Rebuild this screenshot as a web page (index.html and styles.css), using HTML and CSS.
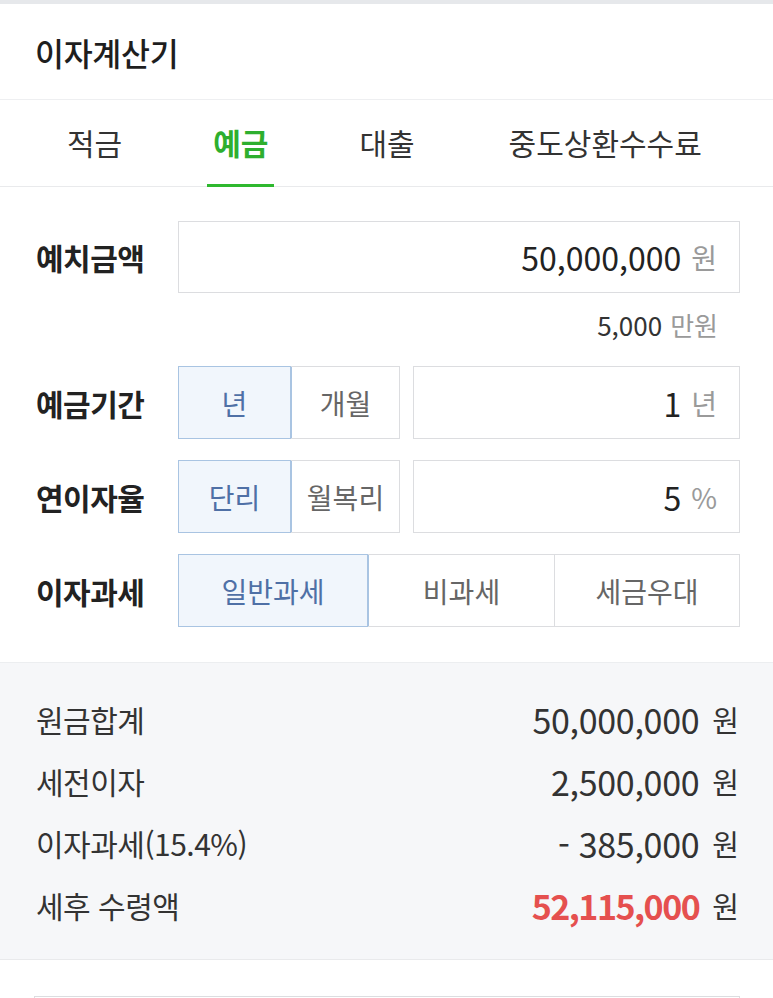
FILE: index.html
```html
<!DOCTYPE html>
<html lang="ko">
<head>
<meta charset="utf-8">
<title>이자계산기</title>
<link rel="stylesheet" href="styles.css">
</head>
<body>
<div class="topbar"></div>
<header class="header"><h1 class="title">이자계산기</h1></header>
<nav class="tabs">
  <span class="tab">적금</span>
  <span class="tab active">예금</span>
  <span class="tab">대출</span>
  <span class="tab">중도상환수수료</span>
</nav>
<section class="form">
  <div class="row">
    <div class="label">예치금액</div>
    <div class="box field"><span class="num">50,000,000</span><span class="unit">원</span></div>
  </div>
  <div class="sub"><span class="num">5,000</span><span class="unit">만원</span></div>
  <div class="row">
    <div class="label">예금기간</div>
    <div class="split">
      <div class="seg two">
        <span class="opt on">년</span>
        <span class="opt">개월</span>
      </div>
      <div class="box field"><span class="num">1</span><span class="unit">년</span></div>
    </div>
  </div>
  <div class="row gap">
    <div class="label">연이자율</div>
    <div class="split">
      <div class="seg two">
        <span class="opt on">단리</span>
        <span class="opt">월복리</span>
      </div>
      <div class="box field"><span class="num">5</span><span class="unit">%</span></div>
    </div>
  </div>
  <div class="row gap">
    <div class="label">이자과세</div>
    <div class="seg three">
      <span class="opt on">일반과세</span>
      <span class="opt">비과세</span>
      <span class="opt">세금우대</span>
    </div>
  </div>
</section>
<section class="result">
  <div class="res-row"><span class="res-label">원금합계</span><span class="res-val"><span class="amt">50,000,000</span><span class="won">원</span></span></div>
  <div class="res-row"><span class="res-label">세전이자</span><span class="res-val"><span class="amt">2,500,000</span><span class="won">원</span></span></div>
  <div class="res-row"><span class="res-label">이자과세(15.4%)</span><span class="res-val"><span class="amt">- 385,000</span><span class="won">원</span></span></div>
  <div class="res-row"><span class="res-label">세후 수령액</span><span class="res-val"><span class="amt total">52,115,000</span><span class="won">원</span></span></div>
</section>
<div class="next-box"></div>
</body>
</html>
```
FILE: styles.css
```css
* { box-sizing: border-box; }
body {
  margin: 0;
  background: #ffffff;
  font-family: "Noto Sans CJK KR", "Noto Sans", sans-serif;
  color: #222;
  overflow: hidden;
}
.topbar { height: 4px; background: #e6e8eb; }
.header {
  height: 96px;
  display: flex;
  align-items: center;
  padding-left: 35px;
  border-bottom: 1px solid #eeeff1;
}
.title {
  margin: 0;
  font-size: 31.5px;
  font-weight: 500;
  color: #1e1e1e;
  letter-spacing: -0.3px;
}
.tabs {
  height: 87px;
  display: flex;
  gap: 79px;
  padding-left: 61px;
  border-bottom: 1px solid #e9eaec;
}
.tab {
  display: flex;
  align-items: center;
  padding: 0 6px;
  font-size: 30px;
  color: #333;
  margin-bottom: -1px;
  border-bottom: 3px solid transparent;
}
.tab:last-child { margin-left: 3px; }
.tab.active {
  color: #2eaf2e;
  font-weight: 700;
  border-bottom-color: #2eb82e;
}
.form {
  padding: 34px 33px 35px 36px;
  border-bottom: 1px solid #eceef0;
}
.row {
  display: grid;
  grid-template-columns: 142px 1fr;
  align-items: center;
  height: 73px;
}
.row:first-child { height: 72px; }
.row.gap { margin-top: 21px; }
.label {
  font-size: 30px;
  font-weight: 700;
  color: #222;
  letter-spacing: -0.5px;
}
.box {
  border: 1px solid #dcdde0;
  height: 100%;
}
.field {
  display: flex;
  align-items: center;
  justify-content: flex-end;
  padding-right: 22px;
  gap: 10px;
}
.field .num { font-size: 32px; color: #222; }
.field .unit { font-size: 28px; color: #9a9a9a; }
.sub {
  display: flex;
  justify-content: flex-end;
  align-items: center;
  gap: 8px;
  height: 38px;
  margin: 12px 22px 23px 0;
}
.sub .num { font-size: 26px; color: #333; }
.sub .unit { font-size: 26px; color: #9a9a9a; }
.split {
  display: grid;
  grid-template-columns: 222px 1fr;
  gap: 13px;
  height: 100%;
}
.seg {
  display: grid;
  height: 100%;
  border: 1px solid #dcdde0;
}
.seg.two { grid-template-columns: 112px 1fr; }
.seg.three { grid-template-columns: 189px 186px 1fr; }
.opt {
  display: flex;
  align-items: center;
  justify-content: center;
  font-size: 28px;
  color: #666;
  border-left: 1px solid #dcdde0;
}
.opt:first-child { border-left: none; }
.opt.on {
  background: #f1f6fc;
  color: #4f70a6;
  outline: 1px solid #a9c4e2;
  outline-offset: -1px;
  margin: -1px 0 -1px -1px;
}
.opt.on + .opt { border-left-color: #a9c4e2; }
.result {
  background: #f6f7f9;
  padding: 25px 34px 23px 36px;
  border-bottom: 1px solid #e9eaec;
}
.res-row {
  height: 62px;
  display: flex;
  align-items: center;
  justify-content: space-between;
}
.res-label { font-size: 30px; color: #333; letter-spacing: -0.5px; }
.res-val { display: flex; align-items: center; gap: 13px; }
.amt { font-size: 34px; color: #333; letter-spacing: -0.3px; }
.amt.total { color: #e5504f; font-weight: 700; letter-spacing: -1.5px; }
.won { font-size: 29px; color: #333; }
.next-box {
  margin: 36px 33px 0 34px;
  height: 40px;
  border: 1px solid #dcdde0;
}
```
